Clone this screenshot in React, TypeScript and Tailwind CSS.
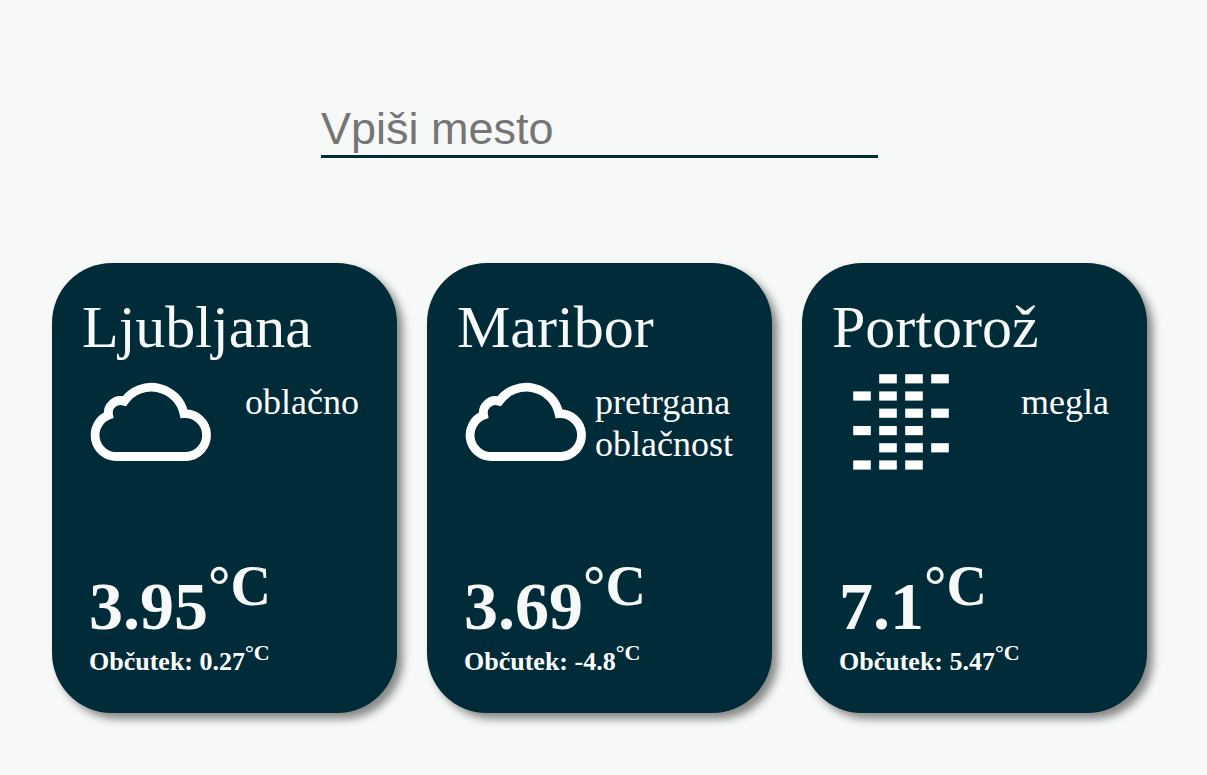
type Icon = 'cloud' | 'fog';

type Weather = {
  city: string;
  icon: Icon;
  description: string;
  temperature: string;
  feelsLike: string;
};

const cities: Weather[] = [
  { city: 'Ljubljana', icon: 'cloud', description: 'oblačno', temperature: '3.95', feelsLike: '0.27' },
  { city: 'Maribor', icon: 'cloud', description: 'pretrgana oblačnost', temperature: '3.69', feelsLike: '-4.8' },
  { city: 'Portorož', icon: 'fog', description: 'megla', temperature: '7.1', feelsLike: '5.47' },
];

const fogRows = [21, 38.2, 55.4, 72.8, 90, 107.2];

function CloudIcon() {
  return (
    <svg viewBox="0 0 138 138" className="size-[138px] shrink-0" fill="none" aria-hidden="true">
      <path
        d="M34.4 103.5A21.4 21.4 0 0 1 26.6 62.2A12.2 12.2 0 0 1 42.3 48.2A33.3 33.3 0 0 1 102 60.7A21.4 21.4 0 1 1 104.2 103.5Z"
        stroke="#fff"
        strokeWidth="8.8"
      />
    </svg>
  );
}

function FogIcon() {
  return (
    <svg viewBox="0 0 138 138" className="size-[138px] shrink-0" fill="#fff" aria-hidden="true">
      {fogRows.map((y, row) =>
        (row % 2 === 0 ? [47, 73, 99] : [21, 47, 73]).map((x) => (
          <rect key={`${x}-${y}`} x={x + 0.2} y={y + 0.2} width="17.6" height="9.2" />
        )),
      )}
    </svg>
  );
}

function WeatherCard({ city, icon, description, temperature, feelsLike }: Weather) {
  return (
    <article className="flex min-h-[450px] w-[345px] flex-col rounded-[60px] bg-[#002b38] pt-[38px] pb-[25px] pl-[30px] text-[#f7f9f8] shadow-[6px_6px_8px_#888]">
      <h2 className="text-[60px] leading-[52px]">{city}</h2>
      <div className="flex items-start justify-between pr-[38px]">
        {icon === 'cloud' ? <CloudIcon /> : <FogIcon />}
        <p className="pt-7 text-[36px] leading-[42px] text-white">{description}</p>
      </div>
      <div className="mt-auto pl-[7px] font-bold">
        <p className="text-[68px] leading-[60px]">
          {temperature}
          <sup className="static align-super text-[56px]">°C</sup>
        </p>
        <p className="text-[26px] leading-[52px] text-white">
          Občutek: {feelsLike}
          <sup className="static align-super text-[22px]">°C</sup>
        </p>
      </div>
    </article>
  );
}

export default function App() {
  return (
    <main className="flex min-h-screen flex-col items-center bg-[#f7f9f8] pt-[103px] pr-2 pb-12 font-['Liberation_Serif',serif]">
      <input
        type="text"
        aria-label="Vpiši mesto"
        placeholder="Vpiši mesto"
        className="h-[55px] w-[557px] max-w-full border-b-[3px] border-[#002b38] bg-transparent font-['Liberation_Sans',sans-serif] text-[45px] leading-[52px] text-[#002b38] outline-none placeholder:text-[#757575]"
      />
      <section className="mt-[105px] flex flex-wrap justify-center gap-[30px]">
        {cities.map((weather) => (
          <WeatherCard key={weather.city} {...weather} />
        ))}
      </section>
    </main>
  );
}
